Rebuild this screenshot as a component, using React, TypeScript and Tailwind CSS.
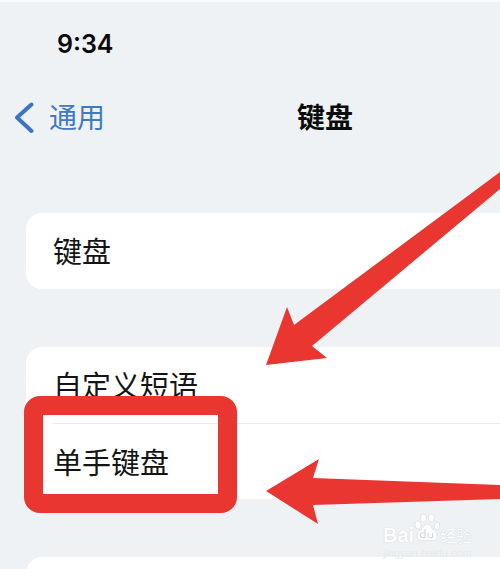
import React from 'react';

const groups = [['键盘'], ['自定义短语', '单手键盘']];

function SettingsRow({ label, divided }: { label: string; divided: boolean }) {
  return (
    <li className="pl-[27px]">
      <button
        type="button"
        className={`block w-full h-[76px] pt-1 text-left text-[29px] leading-10 text-[#141414] ${
          divided ? 'border-t border-[#e9ebec]' : ''
        }`}
      >
        {label}
      </button>
    </li>
  );
}

function Watermark() {
  return (
    <div className="absolute left-[383px] top-[513px] text-white" aria-hidden="true">
      <div className="flex items-end h-8 [text-shadow:0_0_1px_#b9bec2]">
        <span className="font-['Liberation_Sans',sans-serif] font-bold text-[20px] leading-6">Bai</span>
        <svg width="26" height="30" viewBox="0 0 26 30" className="mb-1" fill="#fff" stroke="#d3d7da" strokeWidth="0.6">
          <ellipse cx="4" cy="12" rx="3" ry="4" transform="rotate(-12 4 12)" />
          <ellipse cx="9.500" cy="5" rx="3" ry="4" />
          <ellipse cx="17.500" cy="5" rx="3" ry="4" transform="rotate(8 17.500 5)" />
          <ellipse cx="23" cy="13" rx="2.800" ry="4" transform="rotate(12 23 13)" />
          <path d="M13.500 11c-3 0-4 3.500-6.500 5.800-2.500 2.200-4.500 4-3.700 7.500.9 3.400 4 3.800 9.700 3.200 5.800.6 9.400.2 10.200-3.300.7-3-1.600-5.300-3.900-7.400C17 14.500 16.500 11 13.500 11z" />
          <path d="M11 16v8.500H8.500c-3 0-3-4.500 0-4.500H11M14 20v3c0 1.500 1 1.500 2 1.500h2.500V20" fill="none" stroke="#d3d7da" strokeWidth="1.200" />
        </svg>
        <span className="font-['Noto_Sans_CJK_SC',sans-serif] text-[16px] leading-6">经验</span>
      </div>
      <p className="font-['Liberation_Sans',sans-serif] text-[11px] leading-3 text-[#e6eaec]">jingyan.baidu.com</p>
    </div>
  );
}

export default function App() {
  return (
    <div className="relative h-screen overflow-hidden bg-[#eef2f5] border-t-2 border-[#f8fafb] font-['Inter','Noto_Sans_CJK_SC',sans-serif]">
      <div className="pt-6 pl-[57px] text-[25px] leading-9 font-semibold text-[#0b0b0b]">9:34</div>

      <header className="flex items-center mt-9 pl-[14px]">
        <button type="button" className="flex items-center gap-[15px] w-[283px] text-[28px] leading-10 text-[#4079c4]">
          <svg width="20" height="32" viewBox="0 0 20 32" fill="none" stroke="#3b73c6" strokeWidth="4" strokeLinecap="round" strokeLinejoin="round">
            <path d="M17.500 2.500 3 15.500l14.500 13.500" />
          </svg>
          通用
        </button>
        <h1 className="text-[28px] leading-10 font-bold text-[#0b0b0b]">键盘</h1>
      </header>

      <main className="flex flex-col gap-[58px] mt-[75px] ml-[26px]">
        {groups.map((rows) => (
          <ul key={rows[0]} className="bg-white rounded-l-2xl">
            {rows.map((label, i) => (
              <SettingsRow key={label} label={label} divided={i > 0} />
            ))}
          </ul>
        ))}
        <div className="h-20 bg-white rounded-l-2xl" />
      </main>

      {/* highlight frame and pointers */}
      <div className="absolute left-6 top-[394px] w-[213px] h-[117px] border-[19px] border-[#e93631] rounded-2xl" />
      <svg className="absolute left-0 top-[-2px]" width="500" height="569" viewBox="0 0 500 569" fill="#e93631" aria-hidden="true">
        <path d="M266 365 287 307 294 325 500 172V189L312 346 327 358z" />
        <path d="M266 491 319 459 313 478 500 485V499L313 505 318 524z" />
      </svg>
      <Watermark />
    </div>
  );
}
